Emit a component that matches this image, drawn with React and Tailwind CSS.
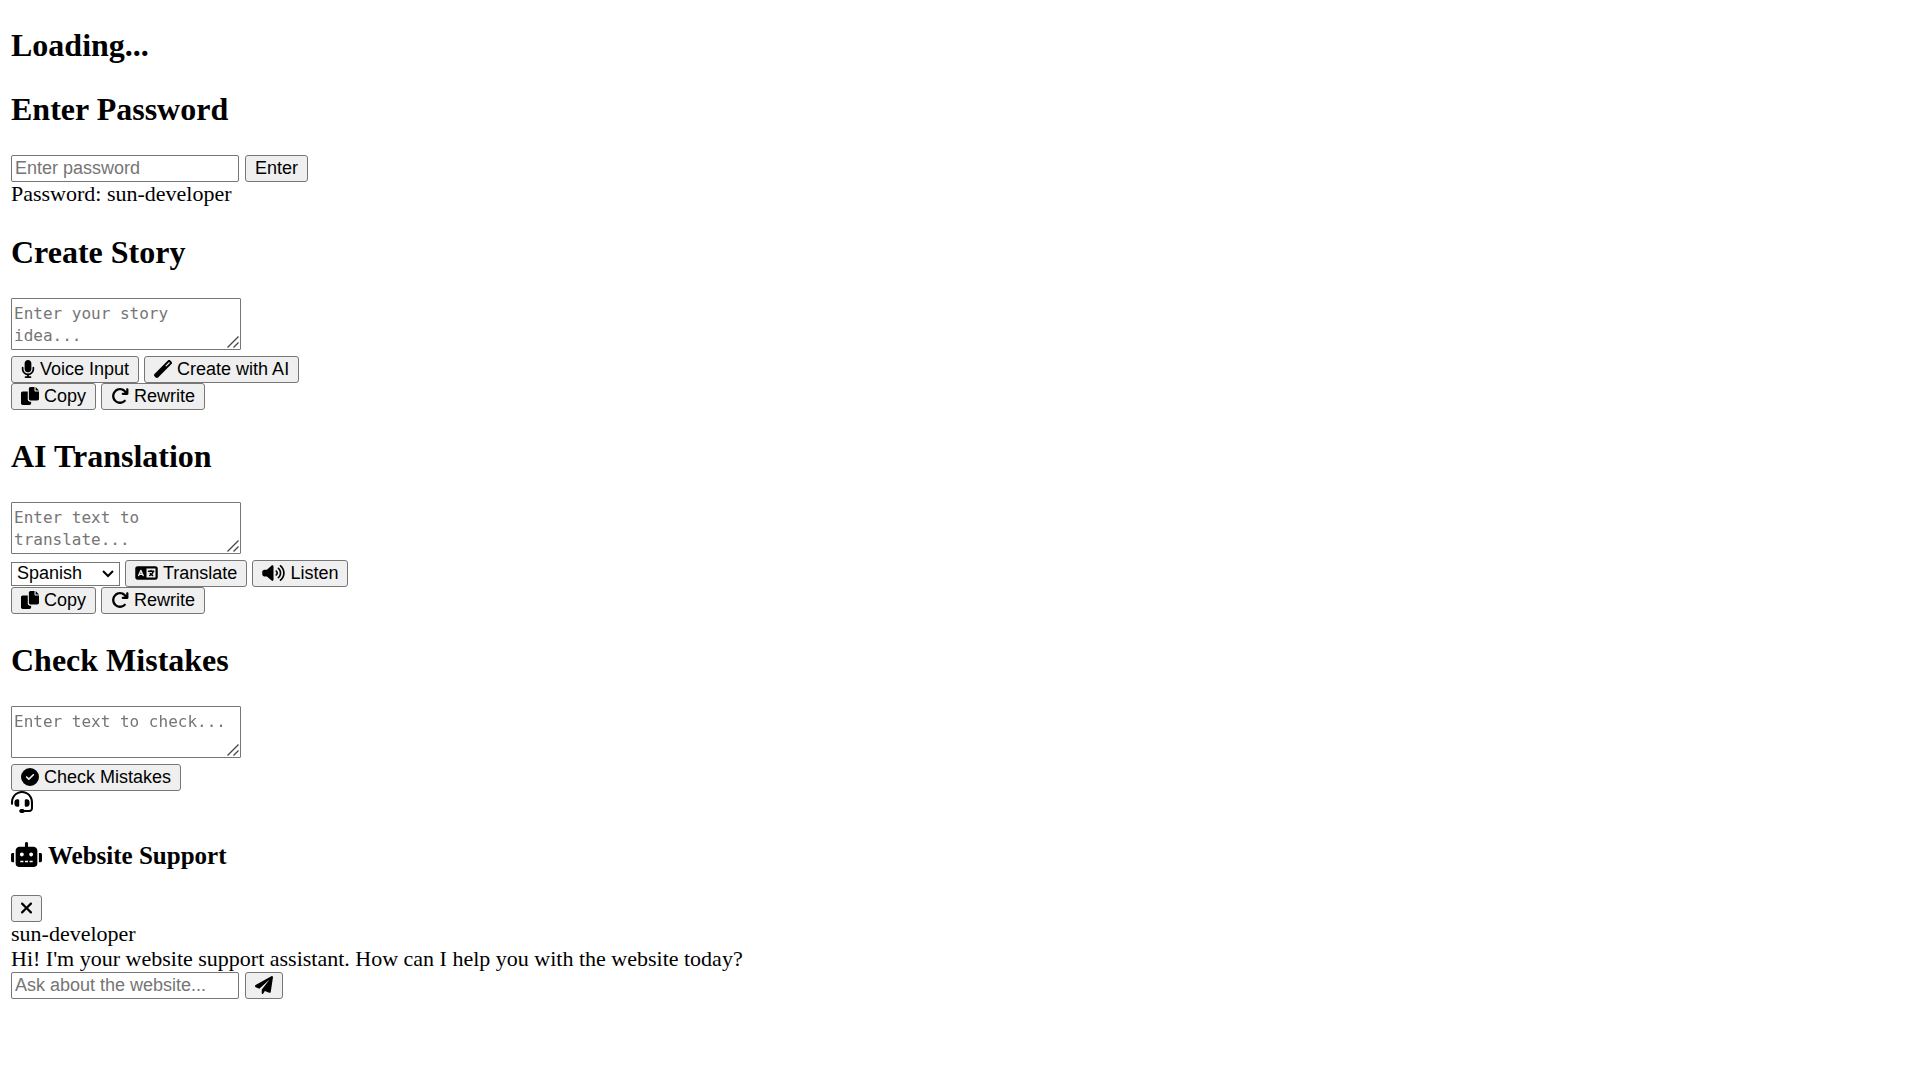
import { useState } from 'react'
import {
  FaArrowRotateRight,
  FaCircleCheck,
  FaLanguage,
  FaMicrophone,
  FaVolumeHigh,
  FaWandMagic,
} from 'react-icons/fa6'

const LANGUAGES = ['Spanish', 'French', 'German', 'Italian', 'Portuguese']

const FIELD = 'border border-[#767676] bg-white placeholder:text-[#757575]'

function CopyIcon({ className }) {
  return (
    <svg viewBox="0 0 512 512" fill="currentColor" className={className}>
      <path d="M384 96L384 0h-112c-26.51 0-48 21.49-48 48v288c0 26.51 21.49 48 48 48H464c26.51 0 48-21.49 48-48V128h-95.1C398.4 128 384 113.6 384 96zM416 0v96h96L416 0zM192 352V128h-144c-26.51 0-48 21.49-48 48v288c0 26.51 21.49 48 48 48h192c26.51 0 48-21.49 48-48L288 416h-32C220.7 416 192 387.3 192 352z" />
    </svg>
  )
}

function HeadsetIcon({ className }) {
  return (
    <svg viewBox="0 0 512 512" fill="currentColor" className={className}>
      <path d="M191.1 224c0-17.72-14.34-32.04-32-32.04L144 192c-35.34 0-64 28.66-64 64.08v47.79C80 339.3 108.7 368 144 368H160c17.66 0 32-14.36 32-32.06L191.1 224zM256 0C112.9 0 4.583 119.1 .0208 256L0 296C0 309.3 10.75 320 23.1 320S48 309.3 48 296V256c0-114.7 93.34-207.8 208-207.8C370.7 48.2 464 141.3 464 256v144c0 22.09-17.91 40-40 40h-110.7C305 425.7 289.7 416 272 416H241.8c-23.21 0-44.5 15.69-48.87 38.49C187 485.2 210.4 512 239.1 512H272c17.72 0 33.03-9.711 41.34-24H424c48.6 0 88-39.4 88-88V256C512 119.1 399.1 0 256 0zM368 368c35.34 0 64-28.7 64-64.13V256.1C432 220.7 403.3 192 368 192l-16 0c-17.66 0-32 14.34-32 32.04L320 335.9C320 353.7 334.3 368 352 368H368z" />
    </svg>
  )
}

function RobotIcon({ className }) {
  return (
    <svg viewBox="0 0 640 512" fill="currentColor" className={className}>
      <path d="M9.375 233.4C3.375 239.4 0 247.5 0 256v128c0 8.5 3.375 16.62 9.375 22.62S23.5 416 32 416h32V224H32C23.5 224 15.38 227.4 9.375 233.4zM464 96H352V32c0-17.62-14.38-32-32-32S288 14.38 288 32v64H176C131.8 96 96 131.8 96 176V448c0 35.38 28.62 64 64 64h320c35.38 0 64-28.62 64-64V176C544 131.8 508.3 96 464 96zM256 416H192v-32h64V416zM224 296C201.9 296 184 278.1 184 256S201.9 216 224 216S264 233.9 264 256S246.1 296 224 296zM352 416H288v-32h64V416zM448 416h-64v-32h64V416zM416 296c-22.12 0-40-17.88-40-40S393.9 216 416 216S456 233.9 456 256S438.1 296 416 296zM630.6 233.4C624.6 227.4 616.5 224 608 224h-32v192h32c8.5 0 16.62-3.375 22.62-9.375S640 392.5 640 384V256C640 247.5 636.6 239.4 630.6 233.4z" />
    </svg>
  )
}

function CloseIcon({ className }) {
  return (
    <svg viewBox="0 0 320 512" fill="currentColor" className={className}>
      <path d="M310.6 361.4c12.5 12.5 12.5 32.75 0 45.25C304.4 412.9 296.2 416 288 416s-16.38-3.125-22.62-9.375L160 301.3L54.63 406.6C48.38 412.9 40.19 416 32 416S15.63 412.9 9.375 406.6c-12.5-12.5-12.5-32.75 0-45.25l105.4-105.4L9.375 150.6c-12.5-12.5-12.5-32.75 0-45.25s32.75-12.5 45.25 0L160 210.8l105.4-105.4c12.5-12.5 32.75-12.5 45.25 0s12.5 32.75 0 45.25l-105.4 105.4L310.6 361.4z" />
    </svg>
  )
}

function SendIcon({ className }) {
  return (
    <svg viewBox="0 0 512 512" fill="currentColor" className={className}>
      <path d="M511.6 36.86l-64 415.1c-1.5 9.734-7.375 18.22-15.97 23.05c-4.844 2.719-10.27 4.097-15.68 4.097c-4.188 0-8.319-.8154-12.29-2.472l-122.6-51.1l-50.86 76.29C226.3 508.5 219.8 512 212.8 512C201.3 512 192 502.7 192 491.2v-96.18c0-7.115 2.372-14.03 6.742-19.64L416 96l-293.7 264.3L19.69 317.5C8.438 312.8 .8125 302.2 .0625 289.1s5.47-23.72 16.06-29.77l448-255.1c10.69-6.109 23.96-5.547 34 1.406S513.5 24.72 511.6 36.86z" />
    </svg>
  )
}

function Heading({ children }) {
  return <h2 className="my-[27px] text-[32px] leading-[37px] font-bold">{children}</h2>
}

function Button({ icon: Icon, iconWidth = 'w-[18px]', label, children }) {
  return (
    <button
      type="button"
      aria-label={label}
      className="flex h-[27px] items-center gap-[5px] rounded-[3px] border border-[#767676] bg-[#efefef] px-[9px] font-['Liberation_Sans',sans-serif] text-[18px] leading-[21px] whitespace-nowrap"
    >
      {Icon && <Icon className={`mb-[2px] h-[18px] shrink-0 ${iconWidth}`} />}
      {children}
    </button>
  )
}

function TextInput({ type = 'text', label }) {
  return (
    <input
      type={type}
      aria-label={label}
      placeholder={label}
      className={`${FIELD} h-[27px] w-[228px] rounded-[2px] px-[3px] font-['Liberation_Sans',sans-serif] text-[18px] leading-[21px]`}
    />
  )
}

function TextArea({ label }) {
  return (
    <div className="relative mb-[6px] w-fit">
      <textarea
        aria-label={label}
        placeholder={label}
        className={`${FIELD} block h-[52px] w-[230px] resize rounded-[1px] px-[2px] py-[4px] font-['DejaVu_Sans_Mono',monospace] text-[16px] leading-[22px] [&::-webkit-resizer]:bg-transparent`}
      />
      {/* resize grip */}
      <svg
        viewBox="0 0 12 12"
        className="pointer-events-none absolute right-[2px] bottom-[2px] size-[12px]"
        fill="none"
        stroke="#444"
        strokeWidth="1.3"
      >
        <path d="M0.5 11.5l11-11M6.5 11.5l5-5" />
      </svg>
    </div>
  )
}

function Row({ children }) {
  return <div className="flex items-center gap-[5px]">{children}</div>
}

function ResultActions() {
  return (
    <div className="flex h-[28px] items-start gap-[5px]">
      <Button icon={CopyIcon}>Copy</Button>
      <Button icon={FaArrowRotateRight}>Rewrite</Button>
    </div>
  )
}

export default function App() {
  const [language, setLanguage] = useState('Spanish')

  return (
    <div className="flow-root px-[11px] font-['Liberation_Serif',serif] text-[22px] leading-[23px] text-black">
      <Heading>Loading...</Heading>

      {/* Password */}
      <section>
        <Heading>Enter Password</Heading>
        <div className="flex gap-[6px]">
          <TextInput type="password" label="Enter password" />
          <Button>Enter</Button>
        </div>
        <p className="pb-[2px]">Password: sun-developer</p>
      </section>

      {/* Story */}
      <section>
        <Heading>Create Story</Heading>
        <TextArea label="Enter your story idea..." />
        <Row>
          <Button icon={FaMicrophone} iconWidth="w-[14px]">Voice Input</Button>
          <Button icon={FaWandMagic}>Create with AI</Button>
        </Row>
        <ResultActions />
      </section>

      {/* Translation */}
      <section>
        <Heading>AI Translation</Heading>
        <TextArea label="Enter text to translate..." />
        <Row>
          <div className="relative">
            <select
              aria-label="Language"
              value={language}
              onChange={(e) => setLanguage(e.target.value)}
              className="block h-[24px] w-[109px] appearance-none border border-[#767676] bg-white pl-[5px] font-['Liberation_Sans',sans-serif] text-[18px] leading-[21px]"
            >
              {LANGUAGES.map((name) => (
                <option key={name}>{name}</option>
              ))}
            </select>
            <svg
              viewBox="0 0 12 8"
              className="pointer-events-none absolute top-[8px] right-[6px] h-[8px] w-[12px]"
              fill="none"
              stroke="currentColor"
              strokeWidth="2"
            >
              <path d="M1 1l5 5 5-5" />
            </svg>
          </div>
          <Button icon={FaLanguage} iconWidth="w-[23px]">Translate</Button>
          <Button icon={FaVolumeHigh} iconWidth="w-[23px]">Listen</Button>
        </Row>
        <ResultActions />
      </section>

      {/* Mistakes */}
      <section>
        <Heading>Check Mistakes</Heading>
        <TextArea label="Enter text to check..." />
        <Button icon={FaCircleCheck}>Check Mistakes</Button>
      </section>

      {/* Support chat */}
      <section>
        <div className="h-[24px]">
          <HeadsetIcon className="size-[22px]" />
        </div>
        <h3 className="mt-[26px] mb-[25px] flex items-center gap-[6px] text-[25px] leading-[29px] font-bold">
          <RobotIcon className="mb-[2px] h-[25px] w-[31px]" />
          Website Support
        </h3>
        <Button icon={CloseIcon} iconWidth="w-[11px]" label="Close" />
        <p className="pb-[2px]">sun-developer</p>
        <p className="pb-[2px]">
          Hi! I'm your website support assistant. How can I help you with the website today?
        </p>
        <div className="flex gap-[6px]">
          <TextInput label="Ask about the website..." />
          <Button icon={SendIcon} label="Send" />
        </div>
      </section>
    </div>
  )
}
